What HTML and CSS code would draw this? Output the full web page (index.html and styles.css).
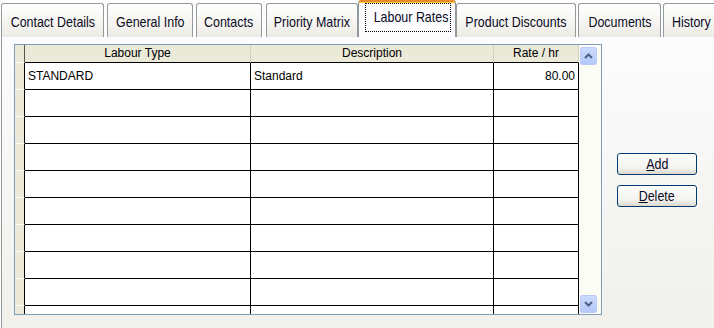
FILE: index.html
```html
<!DOCTYPE html>
<html lang="en">
<head>
    <meta charset="UTF-8">
    <title>Labour Rates</title>
    <link rel="stylesheet" href="styles.css">
</head>
<body>
    <div class="tabs">
        <div class="tab tab-cd"><span class="lbl">Contact Details</span></div>
        <div class="tab tab-gi"><span class="lbl">General Info</span></div>
        <div class="tab tab-ct"><span class="lbl">Contacts</span></div>
        <div class="tab tab-pm"><span class="lbl">Priority Matrix</span></div>
        <div class="tab tab-lr active"><span class="focus"><span class="lbl">Labour Rates</span></span></div>
        <div class="tab tab-pd"><span class="lbl">Product Discounts</span></div>
        <div class="tab tab-doc"><span class="lbl">Documents</span></div>
        <div class="tab tab-hist"><span class="lbl">History</span></div>
    </div>
    <div class="page">
        <div class="grid">
            <div class="grid-body">
                <div class="row head">
                    <div class="cell sel"></div>
                    <div class="cell c1">Labour Type</div>
                    <div class="cell c2">Description</div>
                    <div class="cell c3">Rate / hr</div>
                </div>
                <div class="row">
                    <div class="cell sel"></div>
                    <div class="cell c1">STANDARD</div>
                    <div class="cell c2">Standard</div>
                    <div class="cell c3 num">80.00</div>
                </div>
                <div class="row"><div class="cell sel"></div><div class="cell c1"></div><div class="cell c2"></div><div class="cell c3"></div></div>
                <div class="row"><div class="cell sel"></div><div class="cell c1"></div><div class="cell c2"></div><div class="cell c3"></div></div>
                <div class="row"><div class="cell sel"></div><div class="cell c1"></div><div class="cell c2"></div><div class="cell c3"></div></div>
                <div class="row"><div class="cell sel"></div><div class="cell c1"></div><div class="cell c2"></div><div class="cell c3"></div></div>
                <div class="row"><div class="cell sel"></div><div class="cell c1"></div><div class="cell c2"></div><div class="cell c3"></div></div>
                <div class="row"><div class="cell sel"></div><div class="cell c1"></div><div class="cell c2"></div><div class="cell c3"></div></div>
                <div class="row"><div class="cell sel"></div><div class="cell c1"></div><div class="cell c2"></div><div class="cell c3"></div></div>
                <div class="row"><div class="cell sel"></div><div class="cell c1"></div><div class="cell c2"></div><div class="cell c3"></div></div>
                <div class="row"><div class="cell sel"></div><div class="cell c1"></div><div class="cell c2"></div><div class="cell c3"></div></div>
            </div>
            <div class="vscroll">
                <div class="sbtn">
                    <svg width="9" height="6" viewBox="0 0 9 6"><polyline points="1,5 4.5,1.5 8,5" fill="none" stroke="#4d6185" stroke-width="2"/></svg>
                </div>
                <div class="strack"></div>
                <div class="sbtn">
                    <svg width="9" height="6" viewBox="0 0 9 6"><polyline points="1,1 4.5,4.5 8,1" fill="none" stroke="#4d6185" stroke-width="2"/></svg>
                </div>
            </div>
        </div>
        <div class="actions">
            <button type="button" class="btn"><span class="lbl"><u>A</u>dd</span></button>
            <button type="button" class="btn"><span class="lbl"><u>D</u>elete</span></button>
        </div>
    </div>
</body>
</html>
```

FILE: styles.css
```css
body {
    margin: 0;
    background-color: #fdfdfd;
    font-family: "Liberation Sans", Arial, sans-serif;
    font-size: 12px;
    color: #000;
    height: 328px;
    overflow: hidden;
}
/* narrow label text, like the old condensed UI font */
.lbl {
    display: inline-block;
    font-size: 15px;
    transform: scaleX(0.83);
    white-space: nowrap;
    color: #0a0a1e;
}
.tabs {
    display: flex;
    align-items: flex-end;
    height: 37px;
    padding-left: 1px;
    overflow: hidden;
}
.tab {
    box-sizing: border-box;
    flex-shrink: 0;
    height: 34px;
    border: 1px solid #919b9c;
    border-bottom: none;
    border-radius: 3px 3px 0 0;
    background: linear-gradient(to bottom, #ffffff, #f5f4f0 60%, #ebeae4);
    display: flex;
    align-items: center;
    justify-content: center;
    padding-top: 2px;
    white-space: nowrap;
}
.tab-cd { width: 103px; }
.tab-gi { width: 86px; margin-left: 3px; }
.tab-ct { width: 66px; margin-left: 3px; }
.tab-pm { width: 92px; margin-left: 4px; }
.tab-lr { width: 98px; }
.tab-pd { width: 120px; }
.tab-doc { width: 83px; margin-left: 2px; }
.tab-hist { width: 60px; margin-left: 2px; justify-content: flex-start; padding-left: 8px; }
.tab-hist .lbl { transform-origin: left center; }

.tab.active {
    height: 38px;
    margin-bottom: -1px;
    position: relative;
    z-index: 1;
    background: #fcfcfe;
    border-top: 2px solid #e68b2c;
    box-shadow: inset 0 1px 0 #ffc73c;
    align-items: flex-start;
    justify-content: flex-start;
    padding: 1px 0 0 6px;
}
.focus {
    display: block;
    box-sizing: border-box;
    width: 86px;
    height: 29px;
    line-height: 26px;
    text-align: center;
    border: 1px dotted #000;
}

.page {
    box-sizing: border-box;
    height: 291px;
    margin-left: 1px;
    border-left: 1px solid #919b9c;
    background: linear-gradient(to bottom, #fcfcfe, #f1f0eb);
    display: flex;
    padding: 7px 0 0 12px;
}

.grid {
    box-sizing: border-box;
    flex-shrink: 0;
    width: 588px;
    height: 271px;
    border: 1px solid #7f9db9;
    display: flex;
    background: #fff;
}
.grid-body {
    width: 564px;
    height: 269px;
    overflow: hidden;
}
.row {
    display: flex;
    height: 27px;
}
.cell {
    box-sizing: border-box;
    flex-shrink: 0;
    height: 100%;
    border-right: 1px solid #000;
    border-bottom: 1px solid #000;
    padding: 0 3px;
    line-height: 26px;
    white-space: nowrap;
    overflow: hidden;
}
.sel {
    width: 10px;
    background: #ece9d8;
    border-bottom-color: #fbfaf5;
    border-right-color: #000;
    padding: 0;
}
.c1 { width: 226px; }
.c2 { width: 243px; }
.c3 { width: 85px; }
.num { text-align: right; }

.row.head {
    height: 18px;
}
.head .cell {
    background: #ebe9d8;
    line-height: 17px;
    text-align: center;
    border-right-color: #d4d0bf;
}
.head .sel {
    border-right-color: #55544d;
    border-bottom-color: #fbfaf5;
}

.vscroll {
    box-sizing: border-box;
    width: 22px;
    height: 269px;
    background: #fcfcf7;
    padding: 2px 4px 1px 1px;
    display: flex;
    flex-direction: column;
}
.strack {
    flex: 1;
}
.sbtn {
    box-sizing: border-box;
    width: 17px;
    height: 18px;
    border: 1px solid #b9cbf5;
    border-radius: 2px;
    background: linear-gradient(to bottom, #cbd9fc, #b5c9f9);
    display: flex;
    align-items: center;
    justify-content: center;
}

.actions {
    display: flex;
    flex-direction: column;
    gap: 10px;
    padding: 109px 0 0 15px;
}
.btn {
    box-sizing: border-box;
    width: 80px;
    height: 22px;
    border: 1px solid #003c74;
    border-radius: 3px;
    background: linear-gradient(to bottom, #ffffff, #f3f2ee 70%, #dcd8cc);
    font-family: "Liberation Sans", Arial, sans-serif;
    line-height: 18px;
    color: #000;
    padding: 0;
}
```
